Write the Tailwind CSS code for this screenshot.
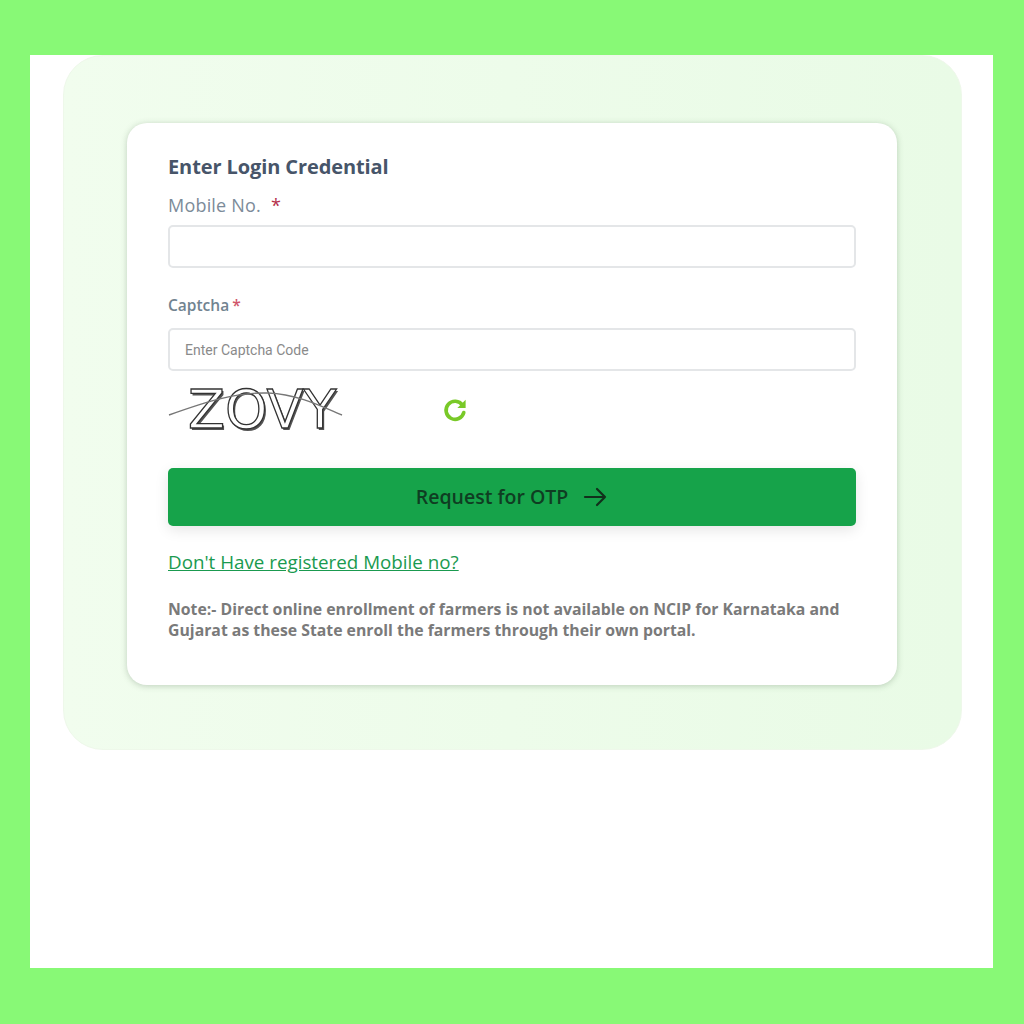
<!DOCTYPE html>
<html lang="en">
<head>
<meta charset="utf-8">
<title>Enter Login Credential</title>
<script src="https://cdn.jsdelivr.net/npm/@tailwindcss/browser@4"></script>
</head>
<body class="m-0">
<!-- green frame -->
<div class="w-[1024px] h-[1024px] bg-[#88f976] pt-[55px] pb-[56px] pl-[30px] pr-[31px] font-['Open_Sans',sans-serif]">
  <div class="h-full bg-white pl-[33px] pr-[31px]">

    <!-- pale green panel -->
    <div class="h-[695px] rounded-[40px] bg-gradient-to-r from-[#f1fdee] to-[#e9fbe6] border border-[#eef8ea] pt-[67px] pl-[63px] pr-[64px]">

      <!-- login card -->
      <div class="h-[562px] bg-white rounded-[20px] shadow-[0_1px_6px_rgba(60,90,60,0.28)] pt-[30px] px-[41px]">
        <h2 class="text-[20px] leading-[28px] font-bold tracking-[-0.1px] text-[#475569]">Enter Login Credential</h2>

        <label class="block mt-[12px] text-[18px] leading-[25px] text-[#7c8b99] tracking-[0.2px]">Mobile No. <span class="text-[#b4304a] ml-[5px]">*</span></label>
        <input type="text" class="block w-full h-[43px] mt-[7px] rounded-[5px] bg-white border-2 border-[#e4e6e8]">

        <label class="block mt-[25px] text-[15.5px] leading-[24px] font-semibold text-[#718390]">Captcha<span class="text-[#d0566a] ml-[3px]">*</span></label>
        <input type="text" placeholder="Enter Captcha Code" class="block w-full h-[43px] mt-[11px] px-[15px] rounded-[5px] bg-white border-2 border-[#e4e6e8] text-[14px] font-['Roboto',sans-serif] placeholder:text-[#8a8a8a]">

        <!-- captcha picture + refresh -->
        <div class="flex items-center h-[54px] mt-[12px]">
          <div class="relative w-[176px] h-[54px]">
            <span class="block pl-[20px] whitespace-nowrap text-[54px] leading-[54px] font-['DejaVu_Sans',sans-serif] text-white [-webkit-text-stroke:1.3px_#333] [text-shadow:1.5px_2px_0_#555]">ZOVY</span>
            <svg class="absolute left-0 top-0" width="176" height="54" viewBox="0 0 176 54" fill="none">
              <path d="M1 32C40 18 70 9 100 10C130 11 155 24 174 32" stroke="#777" stroke-width="1.4"/>
            </svg>
          </div>
          <svg class="ml-[98px]" width="26" height="26" viewBox="0 0 26 26" fill="none">
            <path d="M20.5 8.2A9 9 0 1 0 21.8 15.5" stroke="#79c928" stroke-width="3.6" stroke-linecap="round"/>
            <path d="M23.6 2.8V11H15.4Z" fill="#79c928"/>
          </svg>
        </div>

        <button class="flex items-center justify-center w-full h-[58px] mt-[31px] rounded-[5px] bg-[#16a34a] text-[19.5px] font-semibold text-[#0f3d22] shadow-[0_4px_14px_rgba(0,0,0,0.1)]">
          Request for OTP
          <svg class="ml-[14px]" width="26" height="26" viewBox="0 0 26 26" fill="none" stroke="#12301c" stroke-width="2.2" stroke-linecap="round" stroke-linejoin="round">
            <path d="M3 13H23M15 5L23 13L15 21"/>
          </svg>
        </button>

        <a href="#" class="inline-block mt-[22px] text-[18.8px] leading-[28px] text-[#1a9a4f] underline">Don't Have registered Mobile no?</a>

        <p class="mt-[23px] text-[15.8px] leading-[21px] font-bold text-[#7a7a7a]">Note:- Direct online enrollment of farmers is not available on NCIP for Karnataka and Gujarat as these State enroll the farmers through their own portal.</p>
      </div>
    </div>
  </div>
</div>
</body>
</html>
